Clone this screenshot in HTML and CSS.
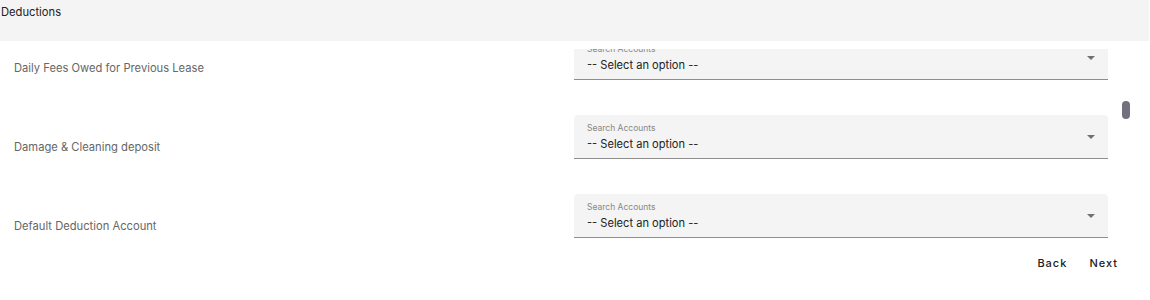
FILE: index.html
```html
<!DOCTYPE html>
<html lang="en">
<head>
  <meta charset="UTF-8">
  <meta name="viewport" content="width=device-width, initial-scale=1.0">
  <title>Deductions</title>
  <link rel="stylesheet" href="styles.css">
</head>
<body>
  <div class="section-title">Deductions</div>

  <div class="list-wrap">
    <div class="account-list" id="account-list"></div>
    <div class="scroll-thumb" id="scroll-thumb"></div>
  </div>

  <div class="step-buttons">
    <button class="step-button">Back</button>
    <button class="step-button">Next</button>
  </div>

  <script>
    const accountList = document.getElementById('account-list');
    const scrollThumb = document.getElementById('scroll-thumb');

    const deductions = [
      'Administrative Fee',
      'Appliance Repair',
      'Carpet Cleaning',
      'Carpet Replacement',
      'Court Costs',
      'Damage to Blinds',
      'Daily Fees Owed',
      'Daily Fees Owed for Previous Lease',
      'Damage & Cleaning deposit',
      'Default Deduction Account',
      'Key Replacement',
      'Late Fees',
      'Lock Change',
      'Move Out Cleaning',
      'Painting',
      'Pest Control',
      'Pet Damage',
      'Pet Fee',
      'Remote Replacement',
      'Rent Owed',
      'Trash Removal',
      'Unpaid Utilities',
      'Wall Repair',
      'Window Repair',
      'Yard Maintenance',
      'Water Damage',
      'Other Charges'
    ];

    deductions.forEach(name => {
      const row = document.createElement('div');
      row.className = 'account-row';

      const label = document.createElement('div');
      label.className = 'account-label';
      label.innerText = name;
      row.appendChild(label);

      const field = document.createElement('div');
      field.className = 'select-field';
      field.innerHTML =
        '<span class="select-caption">Search Accounts</span>' +
        '<span class="select-value">-- Select an option --</span>' +
        '<span class="select-arrow"></span>';
      row.appendChild(field);

      accountList.appendChild(row);
    });

    function updateThumb() {
      const track = accountList.clientHeight;
      const ratio = track / accountList.scrollHeight;
      const len = Math.max(18, Math.round(track * ratio));
      const top = Math.round(accountList.scrollTop * ratio);
      scrollThumb.style.height = len + 'px';
      scrollThumb.style.top = top + 'px';
    }

    accountList.addEventListener('scroll', updateThumb);

    accountList.scrollTop = 7 * 79 + 13;
    updateThumb();
  </script>
</body>
</html>
```

FILE: styles.css
```css
body {
  font-family: 'Inter', 'Liberation Sans', sans-serif;
  margin: 0;
  background: #fff;
  color: #222;
}
.section-title {
  height: 41px;
  box-sizing: border-box;
  padding: 5px 1px 0;
  margin-right: 1px;
  background: #f4f4f4;
  font-size: 11.2px;
  line-height: 14px;
}
.list-wrap {
  position: relative;
  margin-top: 8px;
  margin-right: 20px;
}
.account-list {
  height: 196px;
  overflow-y: auto;
  padding: 0 22px 0 14px;
  scrollbar-width: none;
}
.account-list::-webkit-scrollbar {
  display: none;
}
.scroll-thumb {
  position: absolute;
  right: 0;
  top: 0;
  width: 8px;
  background: #71717f;
  border-radius: 4px;
}
.account-row {
  display: grid;
  grid-template-columns: 560px 1fr;
  align-items: end;
  height: 79px;
  box-sizing: border-box;
  padding-bottom: 35px;
}
.account-label {
  font-size: 11.2px;
  line-height: 14px;
  color: #666;
  padding-bottom: 5px;
}
.select-field {
  position: relative;
  height: 44px;
  box-sizing: border-box;
  background: #f4f4f4;
  border-bottom: 1px solid #8e8e8e;
  border-radius: 4px 4px 0 0;
  padding: 7px 13px 0;
  display: flex;
  flex-direction: column;
}
.select-caption {
  font-size: 8.5px;
  line-height: 12px;
  color: #888;
}
.select-value {
  font-size: 11.1px;
  line-height: 18px;
  color: #222;
  margin-top: 1px;
}
.select-arrow {
  position: absolute;
  right: 13px;
  top: 20px;
  width: 0;
  height: 0;
  border-left: 4px solid transparent;
  border-right: 4px solid transparent;
  border-top: 4px solid #707070;
}
.step-buttons {
  display: flex;
  justify-content: flex-end;
  gap: 6px;
  padding: 5px 24px 0 0;
}
.step-button {
  font-family: inherit;
  font-size: 11px;
  font-weight: 500;
  letter-spacing: 1px;
  color: #222;
  background: none;
  border: none;
  padding: 6px 8px;
  cursor: pointer;
}
```
